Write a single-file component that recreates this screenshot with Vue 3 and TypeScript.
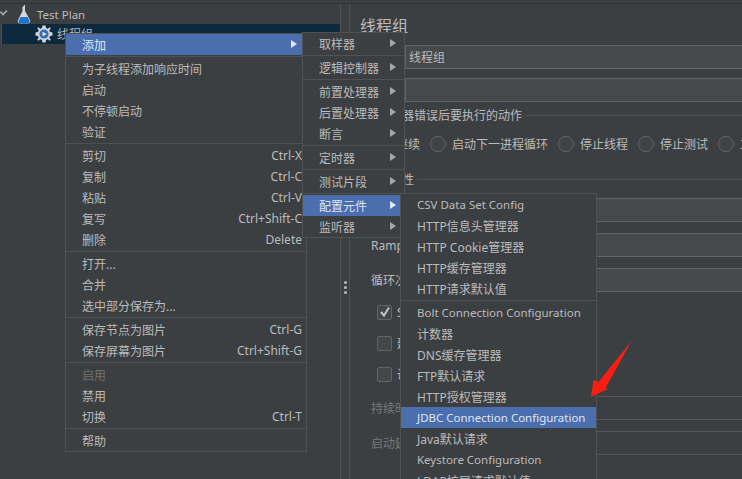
<script setup lang="ts">
interface Item { label?: string; key?: string; sub?: boolean; on?: boolean; off?: boolean; sep?: boolean }
const s: Item = { sep: true }
const main: Item[] = [
  { label: '添加', sub: true, on: true }, s,
  { label: '为子线程添加响应时间' }, { label: '启动' }, { label: '不停顿启动' }, { label: '验证' }, s,
  { label: '剪切', key: 'Ctrl-X' }, { label: '复制', key: 'Ctrl-C' }, { label: '粘贴', key: 'Ctrl-V' },
  { label: '复写', key: 'Ctrl+Shift-C' }, { label: '删除', key: 'Delete' }, s,
  { label: '打开...' }, { label: '合并' }, { label: '选中部分保存为...' }, s,
  { label: '保存节点为图片', key: 'Ctrl-G' }, { label: '保存屏幕为图片', key: 'Ctrl+Shift-G' }, s,
  { label: '启用', off: true }, { label: '禁用' }, { label: '切换', key: 'Ctrl-T' }, s,
  { label: '帮助' },
]
const second: Item[] = [
  { label: '取样器', sub: true }, s, { label: '逻辑控制器', sub: true }, s,
  { label: '前置处理器', sub: true }, { label: '后置处理器', sub: true }, { label: '断言', sub: true }, s,
  { label: '定时器', sub: true }, s, { label: '测试片段', sub: true }, s,
  { label: '配置元件', sub: true, on: true }, { label: '监听器', sub: true },
]
const third: Item[] = [
  { label: 'CSV Data Set Config' }, { label: 'HTTP信息头管理器' }, { label: 'HTTP Cookie管理器' },
  { label: 'HTTP缓存管理器' }, { label: 'HTTP请求默认值' }, s,
  { label: 'Bolt Connection Configuration' }, { label: '计数器' }, { label: 'DNS缓存管理器' },
  { label: 'FTP默认请求' }, { label: 'HTTP授权管理器' }, { label: 'JDBC Connection Configuration', on: true },
  { label: 'Java默认请求' }, { label: 'Keystore Configuration' }, { label: 'LDAP扩展请求默认值' },
]
const menus = [
  { cls: 'm1', items: main },
  { cls: 'm2', items: second },
  { cls: 'm3', items: third },
]
const radios = ['继续', '启动下一进程循环', '停止线程', '停止测试', '立即停止测试']
const isLatin = (t?: string) => !!t && /^[A-Za-z ]+$/.test(t)
</script>

<template>
  <div class="app">
    <div class="workspace">
      <aside class="tree">
        <div class="node">
          <svg class="chev" width="8" height="6" viewBox="0 0 8 6"><path d="M0.5 1.5 L3 4.5 L7 0.5" fill="none" stroke="#a9a9a9" stroke-width="1.6" /></svg>
          <svg class="flask" width="14" height="20" viewBox="0 0 14 20">
            <path d="M8 0.5 L8 7 L13 16 Q14 19 11 19.5 L3 19.5 Q0 19 1 16 L5.5 7 L5.5 3 Z" fill="#d4d6d8" />
            <path d="M3.6 13 L10.6 13 L12.6 17 Q13 19 11 19.5 L3 19.5 Q1 19 1.6 17 Z" fill="#1f74d2" />
          </svg>
          <span class="latin">Test Plan</span>
        </div>
        <div class="node selected">
          <svg class="gear" width="18" height="18" viewBox="0 0 18 18">
            <path d="M7.4 0.5 H10.6 L11 3 L12.7 3.7 L14.8 2.2 L15.8 3.2 L14.3 5.3 L15 7 L17.5 7.4 V10.6 L15 11 L14.3 12.7 L15.8 14.8 L14.8 15.8 L12.7 14.3 L11 15 L10.6 17.5 H7.4 L7 15 L5.3 14.3 L3.2 15.8 L2.2 14.8 L3.7 12.7 L3 11 L0.5 10.6 V7.4 L3 7 L3.7 5.3 L2.2 3.2 L3.2 2.2 L5.3 3.7 L7 3 Z" fill="#d3d5d6" />
            <circle cx="9" cy="9" r="4.6" fill="#3b6db5" />
            <path d="M7.6 6.8 L11.4 9 L7.6 11.2 Z" fill="#eef3fa" />
          </svg>
          <span>线程组</span>
        </div>
      </aside>
      <div class="splitter"><i></i><i></i><i></i></div>
      <main class="panel">
        <h1 class="title">线程组</h1>
        <div class="row name"><label>名称：</label><div class="field">线程组</div></div>
        <div class="row comment"><label>注释：</label><div class="field"></div></div>
        <div class="legend action"><span>在取样器错误后要执行的动作</span></div>
        <div class="radios">
          <div v-for="r in radios" :key="r" class="radio"><b></b><span>{{ r }}</span></div>
        </div>
        <div class="legend props"><span>线程属性</span></div>
        <div class="row r1"><label>线程数：</label><div class="field"></div></div>
        <div class="row r2"><label>Ramp-Up时间(秒)：</label><div class="field"></div></div>
        <div class="row r2"><label>循环次数</label><div class="field"></div></div>
        <div class="check c1"><b class="checked"><svg width="12" height="12" viewBox="0 0 12 12"><path d="M2 6 L5 9.5 L10 1.5" fill="none" stroke="#c4c4c4" stroke-width="2" /></svg></b><span>Same user on each iteration</span></div>
        <div class="check c2"><b></b><span>延迟创建线程直到需要</span></div>
        <div class="check c2"><b></b><span>调度器</span></div>
        <div class="row off r3"><label>持续时间（秒）</label><div class="field"></div></div>
        <div class="row off r2"><label>启动延迟（秒）</label><div class="field"></div></div>
      </main>
    </div>

    <div v-for="m in menus" :key="m.cls" class="menu" :class="m.cls">
      <template v-for="(it, i) in m.items" :key="i">
        <div v-if="it.sep" class="sep"></div>
        <div v-else class="item" :class="{ on: it.on, off: it.off }">
          <span :class="{ latin: isLatin(it.label) }">{{ it.label }}</span>
          <em v-if="it.key">{{ it.key }}</em>
          <u v-if="it.sub"></u>
        </div>
      </template>
    </div>

    <svg class="pointer" width="50" height="66" viewBox="0 0 50 66">
      <path d="M41.5 1 L15.5 48 L17.5 49 L1 57 L3.5 40 L8.5 42 Z" fill="#ff1d12" />
    </svg>
  </div>
</template>

<style scoped>
.app {
  position: relative;
  width: 742px;
  height: 479px;
  overflow: hidden;
  background: #3c3f41;
  color: #bbbbbb;
  font: 12px "Noto Sans", "Noto Sans CJK SC", sans-serif;
}
.latin { font-size: 11.5px; }
.workspace {
  display: flex;
  height: 475px;
  margin-top: 4px;
  box-shadow: 0 -1px 0 #323232;
}
.tree { width: 340px; flex: none; }
.node {
  position: relative;
  display: flex;
  align-items: center;
  height: 20px;
  padding-left: 37px;
}
.chev { position: absolute; left: 0; top: 6px; }
.flask { position: absolute; left: 17px; top: 0; }
.node.selected {
  background: #0d293e;
  padding-left: 55px;
  border-left: 1px solid #3c5266;
  margin-left: 1px;
}
.gear { position: absolute; left: 33px; top: 1px; }
.splitter {
  flex: none;
  width: 8px;
  border-left: 1px solid #515151;
  border-right: 1px solid #515151;
  display: flex;
  flex-direction: column;
  align-items: center;
  justify-content: center;
  gap: 2px;
  padding-top: 92px;
}
.splitter i { width: 3px; height: 3px; border-radius: 50%; background: #bbbbbb; }
.panel { flex: 1; min-width: 0; }
.title { margin: 11px 0 0 10px; font-size: 16px; font-weight: 400; line-height: 22px; }
.row { display: flex; align-items: center; height: 24px; margin-top: 11px; }
.row label { flex: none; box-sizing: border-box; width: 55px; padding-left: 21px; white-space: nowrap; overflow: hidden; }
.row .field {
  flex: 1;
  height: 24px;
  box-sizing: border-box;
  background: #45494a;
  border: 1px solid #646464;
  border-right: 0;
  padding: 1px 0 0 3px;
  line-height: 22px;
}
.row.name { margin-top: 8px; }
.row.comment { margin-top: 9px; }
.row.r3 { margin-top: 12px; }
.row.off { color: #777777; }
.row.off .field { background: transparent; border-color: #555555; }
.legend {
  display: flex;
  align-items: center;
  gap: 3px;
  height: 16px;
  padding-left: 16px;
  overflow: hidden;
  white-space: nowrap;
}
.legend::after { content: ""; flex: 1; height: 1px; background: #515151; }
.legend.action { margin-top: 5px; }
.legend.props { margin-top: 17px; }
.radios {
  display: flex;
  gap: 10px;
  height: 20px;
  margin-top: 11px;
  padding-left: 24px;
  white-space: nowrap;
}
.radio { display: flex; align-items: center; gap: 6px; flex: none; }
.radio b {
  width: 14px;
  height: 14px;
  border: 1px solid #646464;
  border-radius: 50%;
  background: #3f4345;
}
.check {
  display: flex;
  align-items: center;
  gap: 5px;
  height: 20px;
  padding-left: 27px;
  white-space: nowrap;
}
.check.c1 { margin-top: 10px; }
.check.c2 { margin-top: 11px; }
.check b {
  display: flex;
  align-items: center;
  justify-content: center;
  width: 13px;
  height: 13px;
  border: 1px solid #646464;
  border-radius: 2px;
  background: #43474a;
}
.menu {
  position: absolute;
  box-sizing: border-box;
  background: #3c3f41;
  border: 1px solid #515151;
  white-space: nowrap;
}
.m1 { left: 65px; top: 33px; width: 242px; z-index: 1; }
.m2 { left: 302px; top: 32px; width: 103px; z-index: 2; }
.m3 { left: 400px; top: 193px; width: 197px; z-index: 3; }
.item {
  position: relative;
  display: flex;
  align-items: center;
  justify-content: space-between;
  height: 21px;
  padding: 0 4px 0 16px;
}
.item.on { background: #4b6eaf; color: #dfe6f2; }
.item.off { color: #6f6f6f; }
.item em { font-style: normal; }
.item u {
  position: absolute;
  right: 8px;
  top: 6px;
  width: 0;
  height: 0;
  border-left: 6px solid #a6a6a6;
  border-top: 4px solid transparent;
  border-bottom: 4px solid transparent;
}
.m1 .item u { right: 9px; }
.item.on u { border-left-color: #e4e8f0; }
.sep { height: 3px; box-sizing: border-box; padding-top: 1px; }
.sep::before { content: ""; display: block; height: 1px; background: #515151; }
.pointer { position: absolute; left: 590px; top: 340px; z-index: 4; }
</style>

<style>
html, body { margin: 0; background: #3c3f41; }
</style>
